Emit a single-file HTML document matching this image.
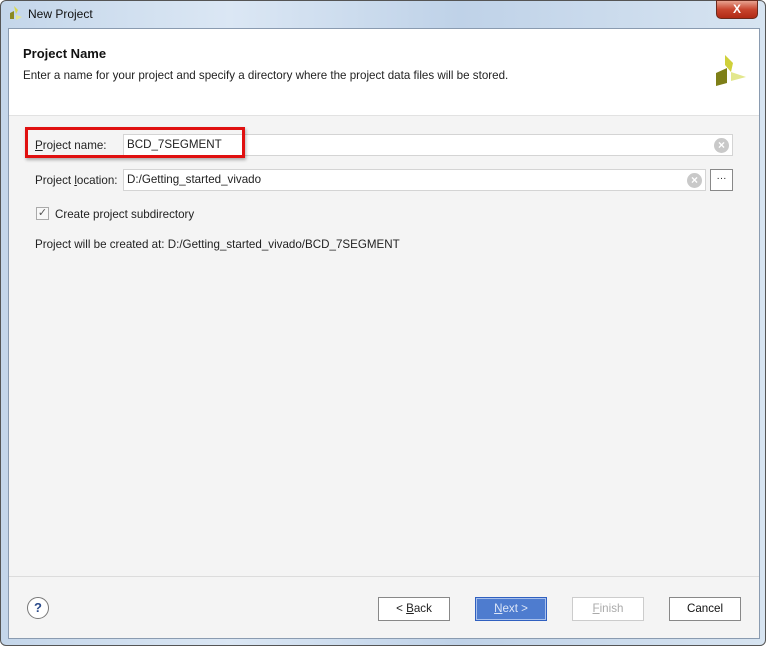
<!DOCTYPE html>
<html><head><meta charset="utf-8"><style>
*{box-sizing:border-box;margin:0;padding:0}
body{width:768px;height:648px;background:#fff;font-family:"Liberation Sans",Arial,sans-serif;font-size:11.6px;color:#222;position:relative;overflow:hidden}
.frame{position:absolute;left:0;top:0;width:766px;height:646px;border:1px solid #555;border-radius:6px;background:linear-gradient(90deg,#c4d6ea,#dbe7f4 30%,#bfd2e8 60%,#d7e4f1);}
.title{position:absolute;left:28px;top:7px;font-size:12px;color:#111}
.close{position:absolute;left:716px;top:0;width:42px;height:19px;background:linear-gradient(#e8a290,#c8452e 50%,#b02a15);border:1px solid #6b2a1c;border-radius:0 0 5px 5px;color:#fff;font-weight:bold;text-align:center;font-size:12px;line-height:17px}
.panel{position:absolute;left:8px;top:28px;width:752px;height:611px;background:#f4f4f4;border:1px solid #8a9bb0}
.hdr{position:absolute;left:0;top:0;width:750px;height:87px;background:#fff;border-bottom:1px solid #e2e2e2}
.abs{position:absolute}
.field{position:absolute;background:#fff;border:1px solid #d4d4d4;height:22px;padding-left:3px;line-height:20px}
.x{position:absolute;top:3px;width:15px;height:15px;border-radius:50%;background:#c9c9c9;color:#fff;font-size:12px;line-height:15px;text-align:center;font-weight:bold}
.btn{position:absolute;top:568px;width:72px;height:24px;border:1px solid #888;background:#fff;text-align:center;line-height:22px}
</style></head><body>
<div class="frame"></div>
<svg class="abs" style="left:7px;top:5px" width="16" height="16" viewBox="0 0 16 16"><polygon points="7,1 11,5 9,9" fill="#d8d84a"/><polygon points="3,8 7,6 7,14 3,14" fill="#8a8a20"/><polygon points="9,10 15,12 9,15" fill="#e4e890"/></svg>
<div class="title">New Project</div>
<div class="close">X</div>
<div class="panel">
 <div class="hdr">
  <div class="abs" style="left:14px;top:17px;font-weight:bold;font-size:13px;color:#111">Project Name</div>
  <div class="abs" style="left:14px;top:40px">Enter a name for your project and specify a directory where the project data files will be stored.</div>
  <svg class="abs" style="left:705px;top:24px" width="34" height="34" viewBox="0 0 34 34"><polygon points="11,2 19,10 17,19 11,12" fill="#cfd03a"/><polygon points="2,20 13,15 13,30 2,33" fill="#7e7f18"/><polygon points="17,19 32,24 17,28" fill="#e3e78c"/></svg>
 </div>
 <div class="field" style="left:114px;top:105px;width:610px">BCD_7SEGMENT<div class="x" style="left:590px">×</div></div>
 <div class="abs" style="left:16px;top:98px;width:220px;height:31px;border:3px solid #e01010;box-shadow:1px 2px 3px rgba(0,0,0,.3)"></div>
 <div class="abs" style="left:26px;top:110px"><u>P</u>roject name:</div>
 <div class="abs" style="left:26px;top:145px">Project <u>l</u>ocation:</div>
 <div class="field" style="left:114px;top:140px;width:583px">D:/Getting_started_vivado<div class="x" style="left:563px">×</div></div>
 <div class="abs" style="left:701px;top:140px;width:23px;height:22px;border:1px solid #888;background:#fff;text-align:center;font-size:10px;line-height:18px">···</div>
 <div class="abs" style="left:27px;top:178px;width:13px;height:13px;border:1px solid #aaa;background:#f8f8f8;font-size:11px;line-height:11px;text-align:center;color:#555">✓</div>
 <div class="abs" style="left:46px;top:179px">Create project subdirectory</div>
 <div class="abs" style="left:26px;top:209px">Project will be created at: D:/Getting_started_vivado/BCD_7SEGMENT</div>
 <div class="abs" style="left:0;top:547px;width:750px;height:1px;background:#dcdcdc"></div>
 <div class="abs" style="left:18px;top:568px;width:22px;height:22px;border:1px solid #777;border-radius:50%;background:#fff;text-align:center;font-weight:bold;color:#2a4a8a;line-height:20px;font-size:13px">?</div>
 <div class="btn" style="left:369px">&lt; <u>B</u>ack</div>
 <div class="btn" style="left:466px;background:#4e7ccf;border:1px solid #3060c0;color:#dde6f7;box-shadow:inset 0 0 0 1px #a8c0ec"><u>N</u>ext &gt;</div>
 <div class="btn" style="left:563px;border-color:#ccc;color:#aaa"><u>F</u>inish</div>
 <div class="btn" style="left:660px;color:#111">Cancel</div>
</div>
</body></html>
